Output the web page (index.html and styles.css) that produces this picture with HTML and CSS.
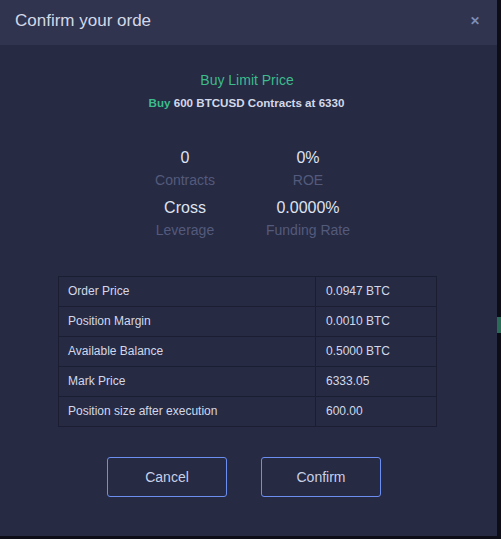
FILE: index.html
```html
<!DOCTYPE html>
<html>
<head>
<meta charset="utf-8">
<link rel="stylesheet" href="styles.css">
</head>
<body>
<div class="page">
  <div class="modal">
    <div class="header">
      <span class="title">Confirm your orde</span>
      <span class="close">&#x2715;</span>
    </div>
    <div class="body">
      <div class="type">Buy Limit Price</div>
      <div class="summary"><span class="green">Buy</span> 600 BTCUSD Contracts at 6330</div>
      <div class="stats">
        <div class="stat"><div class="val">0</div><div class="lbl">Contracts</div></div>
        <div class="stat"><div class="val">0%</div><div class="lbl">ROE</div></div>
        <div class="stat"><div class="val">Cross</div><div class="lbl">Leverage</div></div>
        <div class="stat"><div class="val">0.0000%</div><div class="lbl">Funding Rate</div></div>
      </div>
      <table class="info">
        <tr><td>Order Price</td><td>0.0947 BTC</td></tr>
        <tr><td>Position Margin</td><td>0.0010 BTC</td></tr>
        <tr><td>Available Balance</td><td>0.5000 BTC</td></tr>
        <tr><td>Mark Price</td><td>6333.05</td></tr>
        <tr><td>Position size after execution</td><td>600.00</td></tr>
      </table>
      <div class="buttons">
        <button class="btn">Cancel</button>
        <button class="btn">Confirm</button>
      </div>
    </div>
  </div>
  <div class="side">
    <span class="mark"></span>
  </div>
</div>
</body>
</html>
```
FILE: styles.css
```css
html, body {
  margin: 0;
  padding: 0;
  background: #0d0d17;
  font-family: "Liberation Sans", Arial, sans-serif;
}
.page {
  display: flex;
  width: 501px;
  height: 539px;
}
.modal {
  width: 497px;
  height: 536px;
  background: #262a43;
  display: flex;
  flex-direction: column;
}
.header {
  height: 45px;
  background: #30344f;
  display: flex;
  align-items: center;
  justify-content: space-between;
  padding: 0 17px 0 15px;
  box-sizing: border-box;
}
.title {
  color: #d3d8e8;
  font-size: 17px;
  position: relative;
  top: -2px;
}
.close {
  color: #7d8db8;
  font-size: 12px;
  font-weight: bold;
  position: relative;
  top: -2px;
}
.body {
  display: flex;
  flex-direction: column;
  align-items: center;
  padding-top: 26px;
}
.type {
  color: #3dbb8c;
  font-size: 14px;
  line-height: 18px;
  margin-left: -3px;
}
.summary {
  margin-top: 7px;
  color: #d3d8e8;
  font-size: 11.6px;
  font-weight: bold;
  line-height: 14px;
  margin-left: -4px;
}
.green { color: #3dbb8c; }
.stats {
  margin-top: 38px;
  display: grid;
  grid-template-columns: 123px 123px;
  row-gap: 8px;
  margin-left: -4px;
}
.stat {
  text-align: center;
}
.val {
  color: #dfe3ef;
  font-size: 16px;
  line-height: 19px;
}
.lbl {
  color: #545a7b;
  font-size: 14px;
  line-height: 19px;
  margin-top: 4px;
}
.info {
  margin-top: 36px;
  width: 379px;
  border-collapse: collapse;
  margin-left: -2px;
}
.info td {
  border: 1px solid #1b1e32;
  height: 30px;
  padding: 0 0 1px 9px;
  color: #d3d8e8;
  font-size: 12px;
  box-sizing: border-box;
}
.info td:first-child {
  width: 257px;
}
.info td:last-child {
  padding-left: 10px;
}
.buttons {
  margin-top: 30px;
  display: flex;
  gap: 34px;
  margin-left: -9px;
}
.btn {
  width: 120px;
  height: 40px;
  background: transparent;
  border: 1px solid #6c8ef0;
  border-radius: 3px;
  color: #c8d0e8;
  font-family: "Liberation Sans", Arial, sans-serif;
  font-size: 14px;
}
.side {
  flex: 1;
  position: relative;
}
.mark {
  position: absolute;
  left: 0;
  top: 317px;
  width: 4px;
  height: 16px;
  background: #2a6b58;
}
```
